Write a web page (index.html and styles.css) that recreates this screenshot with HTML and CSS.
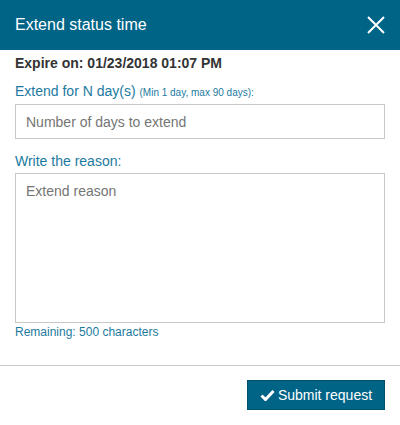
FILE: index.html
```html
<!DOCTYPE html>
<html>
<head>
<meta charset="utf-8">
<link rel="stylesheet" href="styles.css">
</head>
<body>
<div class="modal">
  <div class="header">
    <div class="title">Extend status time</div>
    <svg class="close" width="18" height="18" viewBox="0 0 18 18"><path d="M1 1 L17 17 M17 1 L1 17" stroke="#fff" stroke-width="2" fill="none"/></svg>
  </div>
  <div class="body">
    <div class="expire">Expire on: 01/23/2018 01:07 PM</div>
    <div class="label lbl1">Extend for N day(s) <span class="hint">(Min 1 day, max 90 days):</span></div>
    <input class="input" type="text" placeholder="Number of days to extend">
    <div class="label lbl2">Write the reason:</div>
    <textarea class="textarea" placeholder="Extend reason"></textarea>
    <div class="remaining">Remaining: 500 characters</div>
  </div>
  <div class="footer">
    <button class="submit"><svg width="15" height="12" viewBox="0 0 15 12"><path d="M1.5 6.5 L5.5 10.5 L13.5 2" stroke="#fff" stroke-width="3" fill="none"/></svg>Submit request</button>
  </div>
</div>
</body>
</html>
```
FILE: styles.css
```css
html, body { margin: 0; padding: 0; background: #fff; }
body { font-family: "Liberation Sans", Arial, sans-serif; }
.modal { width: 400px; height: 425px; background: #fff; }
.header { height: 50px; background: #006487; display: flex; align-items: center; justify-content: space-between; padding: 0 15px; box-sizing: border-box; }
.title { color: #fff; font-size: 16px; }
.body { padding: 0 15px; }
.expire { font-weight: bold; font-size: 14px; color: #333; padding-top: 6px; line-height: 14px; }
.label { color: #1c7aa0; font-size: 14px; line-height: 16px; }
.lbl1 { margin-top: 13px; }
.hint { font-size: 10px; }
.input { display: block; box-sizing: border-box; width: 370px; height: 35px; margin-top: 3px; border: 1px solid #c8c8c8; padding: 0 10px; font-family: inherit; font-size: 14px; color: #333; outline: none; }
.input::placeholder, .textarea::placeholder { color: #757575; }
.lbl2 { margin-top: 14px; }
.textarea { display: block; box-sizing: border-box; width: 370px; height: 150px; margin-top: 4px; border: 1px solid #c8c8c8; padding: 9px 10px; font-family: inherit; font-size: 14px; resize: none; outline: none; }
.remaining { color: #1c7aa0; font-size: 12px; margin-top: 2px; line-height: 14px; }
.footer { border-top: 1px solid #ccc; margin-top: 26px; display: flex; justify-content: flex-end; padding: 14px 15px 0; }
.submit { height: 30px; width: 138px; background: #006487; border: 1px solid #004f6b; color: #fff; font-family: inherit; font-size: 14px; display: flex; align-items: center; justify-content: center; gap: 3px; padding: 0; }
```
